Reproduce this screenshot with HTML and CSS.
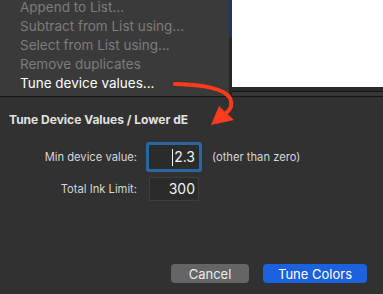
FILE: index.html
```html
<!DOCTYPE html>
<html lang="en">
<head>
    <meta charset="UTF-8">
    <title>Tune Device Values</title>
    <link rel="stylesheet" href="styles.css">
</head>
<body>
    <div class="screen">
        <div class="top-area">
            <ul class="menu">
                <li class="menu-item disabled">Append to List...</li>
                <li class="menu-item disabled">Subtract from List using...</li>
                <li class="menu-item disabled">Select from List using...</li>
                <li class="menu-item disabled">Remove duplicates</li>
                <li class="menu-item">Tune device values...</li>
            </ul>
            <div class="window-edge">
                <span class="edge-blue"></span>
            </div>
            <div class="behind">
                <div class="behind-white"></div>
                <div class="behind-bar"></div>
            </div>
        </div>

        <div class="dialog">
            <h1 class="dialog-title">Tune Device Values / Lower dE</h1>
            <div class="form">
                <label class="form-label">Min device value:</label>
                <div class="field focused"><span class="caret"></span>2.3</div>
                <span class="hint">(other than zero)</span>

                <label class="form-label">Total Ink Limit:</label>
                <div class="field">300</div>
                <span></span>
            </div>
            <div class="buttons">
                <button class="btn btn-cancel">Cancel</button>
                <button class="btn btn-primary">Tune Colors</button>
            </div>
        </div>

        <!-- red annotation arrow drawn over the screenshot -->
        <svg class="arrow" width="383" height="294" viewBox="0 0 383 294">
            <path d="M175 84 Q222 85 230 98 Q234 107 226 113" fill="none" stroke="#ff3b1d" stroke-width="4" stroke-linecap="round"/>
            <polygon points="211,125 219,106 234,120" fill="#ff3b1d"/>
        </svg>
    </div>
</body>
</html>
```

FILE: styles.css
```css
* {
    margin: 0;
    padding: 0;
    box-sizing: border-box;
}

body {
    background: #313131;
    font-family: Inter, "Liberation Sans", sans-serif;
    overflow: hidden;
}

.screen {
    position: relative;
    width: 383px;
    height: 294px;
    display: flex;
    flex-direction: column;
}

.top-area {
    height: 97px;
    display: flex;
    border-bottom: 1px solid #161616;
    background: #3a3a3a;
}

.menu {
    list-style: none;
    width: 229px;
    margin-top: -2px;
}

.menu-item {
    height: 19px;
    line-height: 19px;
    padding-left: 20px;
    font-size: 13.5px;
    color: #ffffff;
}

.menu-item.disabled {
    color: #7c7c7c;
}

.window-edge {
    width: 3px;
    height: 96px;
    background: #262626;
}

.edge-blue {
    display: block;
    height: 37px;
    background: #1c3766;
}

.behind {
    flex: 1;
    display: flex;
    flex-direction: column;
}

.behind-white {
    height: 87px;
    background: #ffffff;
}

.behind-bar {
    flex: 1;
    border-top: 4px solid #2b2b2b;
    background: #373737;
    box-shadow: inset 0 1px 0 #141414;
}

.dialog {
    flex: 1;
    display: flex;
    flex-direction: column;
    background: #313131;
    padding: 15px 16px 11px 0;
}

.dialog-title {
    padding-left: 9px;
    font-size: 12px;
    font-weight: bold;
    line-height: 16px;
    color: #e2e2e2;
}

.form {
    margin-top: 17px;
    display: grid;
    grid-template-columns: 137px 50px auto;
    column-gap: 12px;
    row-gap: 8px;
    align-items: center;
}

.form-label {
    text-align: right;
    font-size: 11.2px;
    color: #d6d6d6;
}

.field {
    height: 24px;
    width: 50px;
    background: #2b2b2b;
    border: 1px solid #3e3e3e;
    text-align: right;
    padding-right: 3px;
    font-size: 14px;
    line-height: 22px;
    color: #f2f2f2;
}

.field.focused {
    border-color: #2a2a2a;
    box-shadow: 0 0 0 3px #2b679e;
    border-radius: 1px;
}

.caret {
    display: inline-block;
    width: 1px;
    height: 17px;
    margin-right: 1px;
    vertical-align: -4px;
    background: #f2f2f2;
}

.hint {
    margin-left: 1px;
    font-size: 11.2px;
    color: #d6d6d6;
}

.buttons {
    margin-top: auto;
    display: flex;
    justify-content: flex-end;
    gap: 14px;
}

.btn {
    height: 19px;
    border: none;
    border-radius: 4px;
    font-family: Inter, "Liberation Sans", sans-serif;
    font-size: 13px;
    color: #ececec;
}

.btn-cancel {
    width: 78px;
    background: #656565;
}

.btn-primary {
    width: 104px;
    background: #1c62de;
    color: #ffffff;
}

.arrow {
    position: absolute;
    left: 0;
    top: 0;
    pointer-events: none;
}
```
